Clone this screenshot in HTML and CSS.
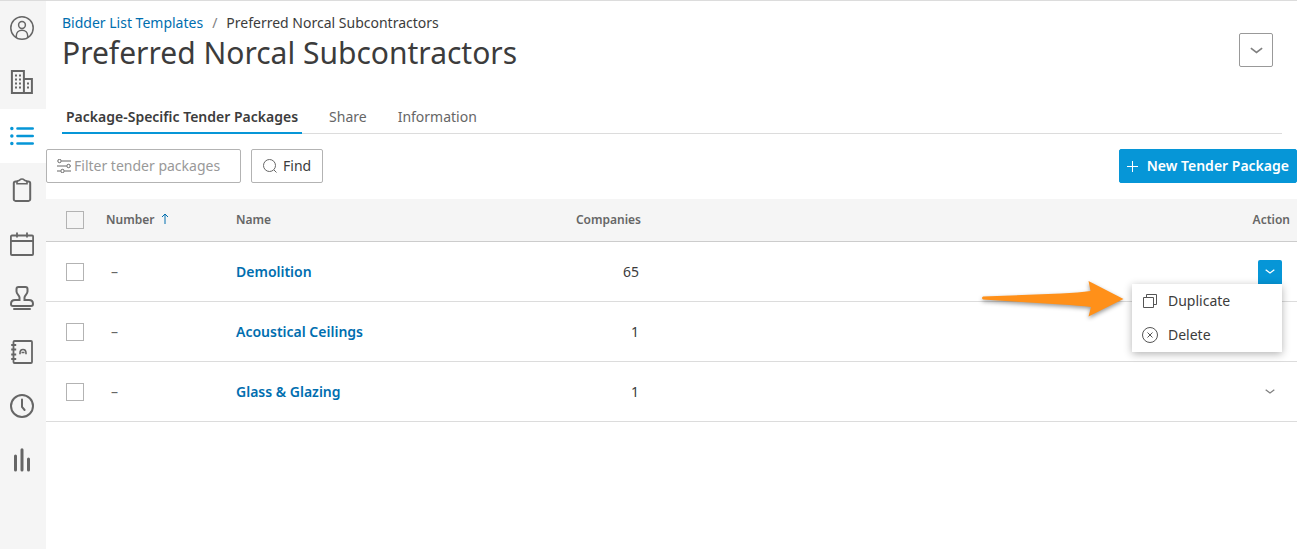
FILE: index.html
```html
<!DOCTYPE html>
<html lang="en">
<head>
  <meta charset="utf-8">
  <meta name="viewport" content="width=device-width, initial-scale=1">
  <title>Preferred Norcal Subcontractors</title>
  <link rel="stylesheet" href="styles.css">
</head>
<body>
  <nav class="sidebar" aria-label="Main">
    <a href="#" class="sidebar-link" aria-label="Account">
      <svg viewBox="0 0 24 24"><g stroke-width="1.5"><circle cx="12" cy="12" r="11.2"/><circle cx="12" cy="9" r="3.4"/><path d="M6.3 21.5v-1.7c0-3.4 2.4-5.6 5.7-5.6s5.7 2.2 5.7 5.6v1.7"/></g></svg>
    </a>
    <a href="#" class="sidebar-link" aria-label="Companies">
      <svg viewBox="0 0 24 24"><path d="M1.9 1h12v22h-12zM13.9 9h8v14h-8"/><path d="M5 5.5h2m2 0h2M5 9.5h2m2 0h2M5 13.5h2m2 0h2M5 17.5h2m2 0h2M17 13.5h2M17 17.5h2"/></svg>
    </a>
    <a href="#" class="sidebar-link active" aria-label="Bidder lists">
      <svg viewBox="0 0 24 24"><g stroke-width="2.6" stroke-linecap="round"><path d="M7.5 4.5h15.2M7.5 12h15.2M7.5 19.5h15.2"/><path stroke-width="3.4" d="M1.8 4.5h.1M1.8 12h.1M1.8 19.5h.1"/></g></svg>
    </a>
    <a href="#" class="sidebar-link" aria-label="Projects">
      <svg viewBox="0 0 24 24"><path d="M7 3.5H5.5A1.7 1.7 0 0 0 3.8 5.2v16a1.7 1.7 0 0 0 1.7 1.7h13a1.7 1.7 0 0 0 1.7-1.7v-16a1.7 1.7 0 0 0-1.7-1.7H17"/><path stroke-width="1.6" d="M7 5.8V4.2c0-1 .8-1.6 1.7-1.6.8 0 1.2-1.6 3.3-1.6s2.5 1.6 3.3 1.6c.9 0 1.7.6 1.7 1.6v1.6z"/></svg>
    </a>
    <a href="#" class="sidebar-link" aria-label="Calendar">
      <svg viewBox="0 0 24 24"><path stroke-width="1.8" d="M1.9 3.5h20.2a1 1 0 0 1 1 1V22a1 1 0 0 1-1 1H1.9a1 1 0 0 1-1-1V4.5a1 1 0 0 1 1-1zM1 9h22M7 .5v5M17 .5v5"/></svg>
    </a>
    <a href="#" class="sidebar-link" aria-label="Approvals">
      <svg viewBox="0 0 24 24"><path d="M9.5 14v-2.500c0-2-3-3.500-3-6V3c0-1.300.7-2 2-2h7c1.300 0 2 .7 2 2v2.500c0 2.500-3 4-3 6V14h4.500c2.500 0 4 1.500 4 4 0 1.300-.6 2-2 2H3c-1.400 0-2-.7-2-2 0-2.500 1.500-4 4-4z"/><path stroke-linecap="round" d="M4 23h16"/></svg>
    </a>
    <a href="#" class="sidebar-link" aria-label="Contacts">
      <svg viewBox="0 0 24 24"><g stroke-width="1.8"><rect x="3.5" y="1" width="18.5" height="22" rx="1"/><path d="M1.2 5h5M1.2 9.5h5M1.2 14.5h5M1.2 19h5"/></g><path stroke-width="1.6" d="M10 14.3V13c0-4.700 6-4.700 6 0v1.300M11.500 12.500h3"/></svg>
    </a>
    <a href="#" class="sidebar-link" aria-label="History">
      <svg viewBox="0 0 24 24"><circle cx="12" cy="12" r="11"/><path stroke-linecap="round" d="M12 5.5V13l2.6 3"/></svg>
    </a>
    <a href="#" class="sidebar-link" aria-label="Reports">
      <svg viewBox="0 0 24 24"><path stroke-width="3" stroke-linecap="round" d="M5.5 8v14M12 1.7V22M18.5 11v11"/></svg>
    </a>
  </nav>

  <main class="content">
    <header class="page-header">
      <div>
        <nav class="breadcrumb" aria-label="Breadcrumb">
          <a href="#">Bidder List Templates</a>
          <span class="separator">/</span>
          <span>Preferred Norcal Subcontractors</span>
        </nav>
        <h1>Preferred Norcal Subcontractors</h1>
      </div>
      <button type="button" class="header-menu" aria-label="More actions">
        <svg class="chevron large" viewBox="0 0 12 6"><path d="M.8.8 6 4.8 11.2.8"/></svg>
      </button>
    </header>

    <nav class="tabs" aria-label="Sections">
      <a href="#" class="tab active">Package-Specific Tender Packages</a>
      <a href="#" class="tab">Share</a>
      <a href="#" class="tab">Information</a>
    </nav>

    <div class="toolbar">
      <label class="filter">
        <svg viewBox="0 0 14 14"><path d="M4.5 2H14M0 7h9.5M13.5 7h.5M0 12h3.5M7.5 12H14"/><circle cx="2.5" cy="2" r="1.7"/><circle cx="11.5" cy="7" r="1.7"/><circle cx="5.5" cy="12" r="1.7"/></svg>
        <input type="text" placeholder="Filter tender packages" aria-label="Filter tender packages">
      </label>
      <button type="button" class="find-button">
        <svg viewBox="0 0 14 14"><circle cx="6.5" cy="6.5" r="6"/><path d="m11 11 2.5 2.5"/></svg>
        Find
      </button>
      <button type="button" class="new-button">
        <svg viewBox="0 0 11 11"><path d="M5.5 0v11M0 5.5h11"/></svg>
        New Tender Package
      </button>
    </div>

    <table class="packages">
      <thead>
        <tr>
          <th class="col-check"><input type="checkbox" aria-label="Select all"></th>
          <th class="col-number">Number <svg class="sort" viewBox="0 0 8 11"><path d="M4 11V1M1 4l3-3 3 3"/></svg></th>
          <th class="col-name">Name</th>
          <th class="col-companies">Companies</th>
          <th class="col-action">Action</th>
        </tr>
      </thead>
      <tbody>
        <tr>
          <td class="col-check"><input type="checkbox" aria-label="Select Demolition"></td>
          <td class="col-number">–</td>
          <td class="col-name"><a href="#">Demolition</a></td>
          <td class="col-companies">65</td>
          <td class="col-action">
            <div class="dropdown">
              <button type="button" class="row-menu open" aria-label="Demolition actions" aria-expanded="true">
                <svg class="chevron" viewBox="0 0 12 6"><path d="M.8.8 6 4.8 11.2.8"/></svg>
              </button>
              <div class="menu">
                <button type="button" class="menu-item">
                  <svg viewBox="0 0 16 16"><path d="M1.5 4.5h10v10h-10zM4.5 4.5v-3h10v10h-3"/></svg>
                  Duplicate
                </button>
                <button type="button" class="menu-item">
                  <svg viewBox="0 0 16 16"><circle cx="8" cy="8" r="7.5"/><path d="m5.5 5.5 5 5m0-5-5 5"/></svg>
                  Delete
                </button>
              </div>
              <svg class="pointer" viewBox="0 0 144 40"><path d="M2 17.5 80 14.5Q98 13.5 109.5 12L107.5 2 142.5 20 107.5 37.5 110 28Q98 26.5 80 25.5L2 20.5Q0 19 2 17.5z"/></svg>
            </div>
          </td>
        </tr>
        <tr>
          <td class="col-check"><input type="checkbox" aria-label="Select Acoustical Ceilings"></td>
          <td class="col-number">–</td>
          <td class="col-name"><a href="#">Acoustical Ceilings</a></td>
          <td class="col-companies">1</td>
          <td class="col-action">
            <button type="button" class="row-menu" aria-label="Acoustical Ceilings actions">
              <svg class="chevron" viewBox="0 0 12 6"><path d="M.8.8 6 4.8 11.2.8"/></svg>
            </button>
          </td>
        </tr>
        <tr>
          <td class="col-check"><input type="checkbox" aria-label="Select Glass &amp; Glazing"></td>
          <td class="col-number">–</td>
          <td class="col-name"><a href="#">Glass &amp; Glazing</a></td>
          <td class="col-companies">1</td>
          <td class="col-action">
            <button type="button" class="row-menu" aria-label="Glass &amp; Glazing actions">
              <svg class="chevron" viewBox="0 0 12 6"><path d="M.8.8 6 4.8 11.2.8"/></svg>
            </button>
          </td>
        </tr>
      </tbody>
    </table>
  </main>
</body>
</html>
```
FILE: styles.css
```css
* {
  box-sizing: border-box;
}

body {
  display: flex;
  min-height: 100vh;
  margin: 0;
  border-top: 1px solid #dcdcdc;
  background-color: #fff;
  color: #3c3c3c;
  font-family: "Noto Sans", sans-serif;
  font-size: 14px;
  line-height: 20px;
}

a {
  color: #006eaf;
  text-decoration: none;
}

button,
input {
  font: inherit;
  color: inherit;
}

button {
  cursor: pointer;
}

svg {
  flex: none;
  fill: none;
  stroke: currentColor;
}

/* sidebar */
.sidebar {
  flex: none;
  width: 46px;
  background-color: #f5f5f5;
}

.sidebar-link {
  display: flex;
  align-items: center;
  height: 54px;
  padding-left: 10px;
  color: #666;
}

.sidebar-link.active {
  background-color: #fff;
  color: #0696d7;
}

.sidebar-link svg {
  width: 24px;
  height: 24px;
  stroke-width: 2;
}

/* header */
.content {
  flex: 1;
  min-width: 0;
}

.page-header {
  display: flex;
  justify-content: space-between;
  align-items: flex-end;
  padding: 12px 24px 0 16px;
}

.breadcrumb {
  display: flex;
  gap: 9px;
}

.separator {
  color: #808080;
}

h1 {
  margin: 0;
  font-size: 30px;
  font-weight: 400;
  line-height: 40px;
}

.header-menu {
  display: flex;
  align-items: center;
  justify-content: center;
  width: 34px;
  height: 34px;
  margin-bottom: 6px;
  padding: 0;
  border: 1px solid #999;
  border-radius: 2px;
  background-color: #fff;
  color: #808080;
}

.chevron {
  width: 10px;
  height: 5px;
  stroke-width: 1.5;
}

.chevron.large {
  width: 13px;
  height: 7px;
}

.tabs {
  display: flex;
  gap: 23px;
  margin: 28px 15px 0 16px;
  border-bottom: 1px solid #dcdcdc;
}

.tab {
  margin-bottom: -1px;
  padding: 6px 4px 5px;
  border-bottom: 2px solid transparent;
  color: #666;
}

.tab.active {
  border-color: #0696d7;
  color: #3c3c3c;
  font-weight: 600;
}

/* toolbar */
.toolbar {
  display: flex;
  gap: 10px;
  padding: 15px 0 16px;
}

.filter,
.find-button,
.new-button {
  display: flex;
  align-items: center;
  height: 34px;
  border: 1px solid #b3b3b3;
  border-radius: 2px;
  background-color: #fff;
}

.filter {
  gap: 3px;
  width: 195px;
  padding: 0 10px;
}

.filter svg,
.find-button svg {
  width: 14px;
  height: 14px;
  color: #666;
}

.filter input {
  flex: 1;
  min-width: 0;
  padding: 0;
  border: 0;
  outline: 0;
}

.filter input::placeholder {
  color: #999;
}

.find-button {
  gap: 6px;
  padding: 0 11px;
}

.new-button {
  gap: 9px;
  margin-left: auto;
  padding: 0 7px;
  border-color: #0696d7;
  background-color: #0696d7;
  color: #fff;
  font-weight: 600;
}

.new-button svg {
  width: 11px;
  height: 11px;
}

/* table */
.packages {
  width: 100%;
  border-spacing: 0;
  table-layout: fixed;
}

.packages th {
  height: 43px;
  padding: 0;
  border-bottom: 1px solid #ccc;
  background-color: #f5f5f5;
  color: #666;
  font-size: 12px;
  font-weight: 600;
  text-align: left;
}

.packages td {
  height: 60px;
  padding: 0;
  border-bottom: 1px solid #dcdcdc;
}

.packages .col-check {
  width: 60px;
  padding-left: 20px;
}

.packages .col-number {
  width: 130px;
}

.packages td.col-number {
  padding-left: 5px;
  color: #666;
}

.packages .col-name {
  width: 270px;
}

.col-name a {
  font-weight: 600;
}

.packages .col-companies {
  width: 135px;
  text-align: right;
}

.packages td.col-companies {
  padding-right: 2px;
}

.packages .col-action {
  padding-right: 7px;
  text-align: right;
}

.packages td.col-action {
  padding-right: 15px;
}

input[type="checkbox"] {
  display: block;
  appearance: none;
  width: 18px;
  height: 18px;
  margin: 0;
  border: 1px solid #b3b3b3;
}

input[type="checkbox"]:checked {
  background-color: #0696d7;
}

.sort {
  width: 8px;
  height: 11px;
  margin-left: 3px;
  color: #006eaf;
}

.row-menu {
  display: flex;
  align-items: center;
  justify-content: center;
  width: 24px;
  height: 24px;
  margin-left: auto;
  padding: 0;
  border: 0;
  border-radius: 2px;
  background-color: transparent;
  color: #808080;
}

.row-menu.open {
  border-radius: 2px 2px 0 0;
  background-color: #0696d7;
  color: #fff;
}

/* open row menu, drawn over the rows below */
.dropdown {
  position: relative;
}

.menu {
  position: absolute;
  top: 100%;
  right: 0;
  z-index: 1;
  width: 150px;
  background-color: #fff;
  box-shadow: 0 2px 8px rgba(0, 0, 0, 0.3);
}

.menu-item {
  display: flex;
  align-items: center;
  gap: 10px;
  width: 100%;
  height: 34px;
  padding: 0 10px;
  border: 0;
  background-color: #fff;
}

.menu-item svg {
  width: 16px;
  height: 16px;
  color: #555;
}

.pointer {
  position: absolute;
  top: 19px;
  right: 157px;
  width: 144px;
  height: 40px;
  fill: #ff9019;
  stroke: none;
  filter: drop-shadow(0 2px 2px rgba(0, 0, 0, 0.4));
}
```
